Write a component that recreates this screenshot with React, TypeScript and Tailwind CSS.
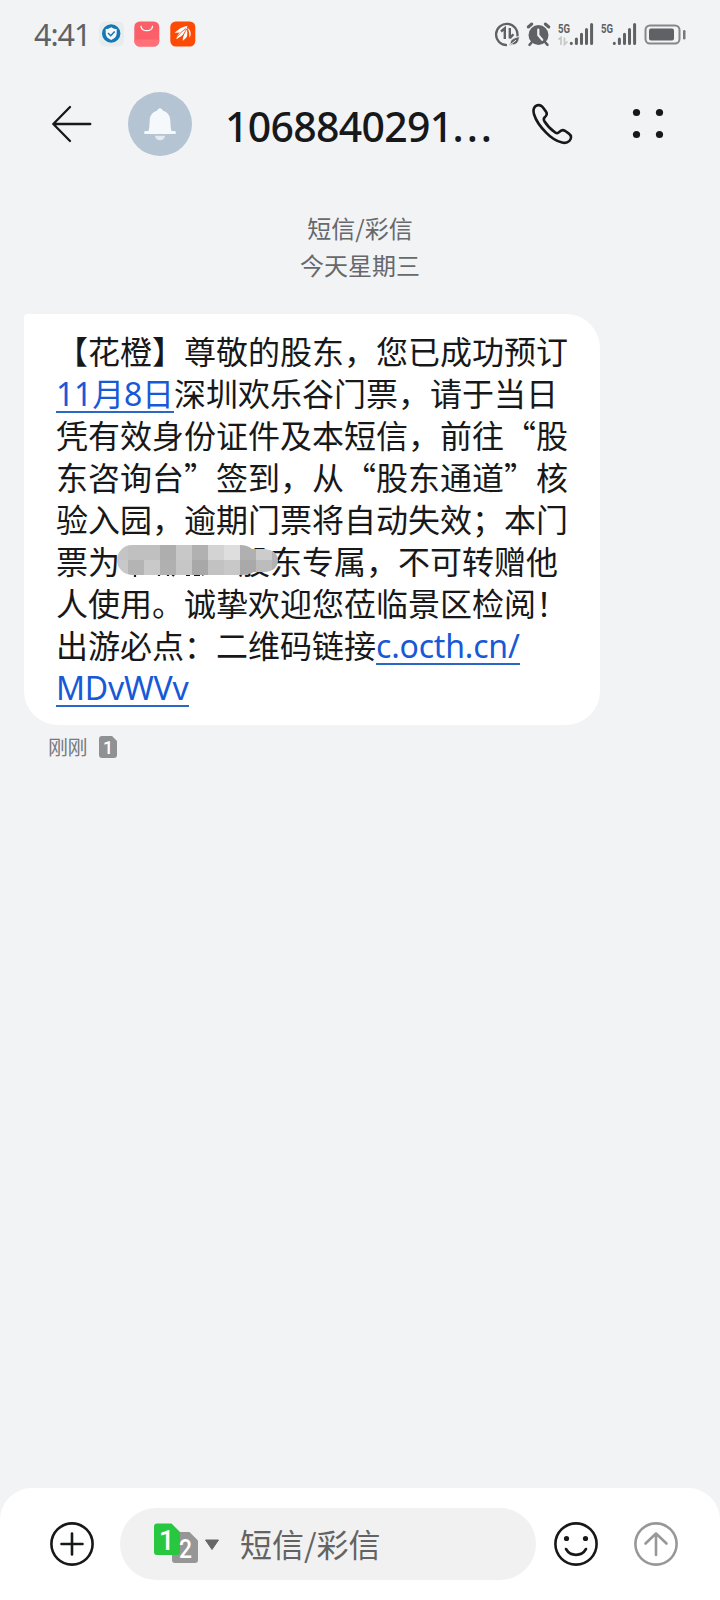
import type { ReactNode } from "react";

const MOSAIC = [
  ["#c4c4c4", "#c0c0c0", "#c0c0c0", "#aeaeae", "#c8c8c8", "#b1b1b1", "#d3d3d3", "#dedede", "#b0b0b0", "#cccccc", "#b6b6b6"],
  ["#c8c8c8", "#b4b4b4", "#c9c9c9", "#b0b0b0", "#c6c6c6", "#a8a8a8", "#c2c2c2", "#c8c8c8", "#a9a9a9", "#bcbcbc", "#b2b2b2"],
];

function StatusBar() {
  return (
    <div className="flex h-[68px] items-center justify-between pl-[34px] pr-[34px] text-[#5f6164]">
      <div className="flex items-center">
        <span className="w-[65px] whitespace-nowrap font-['Noto_Sans','Noto_Sans_CJK_SC',sans-serif] text-[30.5px] leading-[44px] tracking-[-1px]">4:41</span>
        <svg width="98" height="26" viewBox="0 0 98 26">
          {/* security app */}
          <rect x="0" y="0.5" width="25" height="25" rx="6" fill="#e9ecef" />
          <circle cx="12.2" cy="12.5" r="9.2" fill="#1577b3" />
          <path d="M12.2 6.2c2 1.4 3.8 1.8 5.5 1.8v4.2c0 3.4-2.2 5.4-5.5 6.8c-3.3-1.4-5.5-3.4-5.5-6.8V8c1.7 0 3.5-.4 5.5-1.8z" fill="#f5f8fa" />
          <path d="m9 12 2.7 2.7 4-4.2" fill="none" stroke="#1577b3" strokeWidth="1.5" />
          {/* app market */}
          <rect x="35.3" y="0.5" width="25" height="25" rx="5.5" fill="#fb6068" />
          <path d="M35.3 18.5h25V20a5.5 5.5 0 0 1-5.5 5.5h-14a5.5 5.5 0 0 1-5.5-5.5z" fill="#ff7078" />
          <path d="M42 5.5a5.8 4.8 0 0 0 11.5 0" fill="none" stroke="#fff" strokeWidth="1.3" strokeLinecap="round" />
          {/* wing logo */}
          <rect x="71.3" y="0.5" width="25" height="25" rx="5.5" fill="#fb4b05" />
          <path d="M75.5 11.8c3.5-3 8-6.600 13-6.800c-1.200 3.800-4.200 6.300-7.800 6.500c-1.900.2-3.500.1-5.200.3z" fill="#fff" />
          <path d="M77.500 18.200c.2-4.500 4.500-8.500 10-12.200c.7 4.300-2 6.800-4.500 8.600c-1.800 1.300-3.300 2.400-5.500 3.600z" fill="#fff" />
          <path d="M83.800 19.800c-.7-3.800 2.400-8.300 4.200-13c2.300 4.500 1 9.500-4.200 13z" fill="#fff" />
          <path d="M90.500 16.800c.1-3.200-.6-6.800-1.700-9.800c3 2.400 4 6.300 1.700 9.800z" fill="#fff" />
          <path d="M78.500 15.500c2.300-3.300 5.700-6 8.500-7.900M82.800 18.500c.8-4 2.900-7 4.900-10.500M88.600 17c.3-3.800 0-6.300-.3-9" fill="none" stroke="#fb4b05" strokeWidth=".9" />
        </svg>
      </div>
      <svg width="192" height="26" viewBox="494 21 192 26" fill="currentColor">
        {/* data saver */}
        <path d="M517.3 36.5A10.7 10.7 0 1 0 507 45.2" fill="none" stroke="currentColor" strokeWidth="2.3" />
        <path d="M501 31.5l3.8-3.2V39M509.8 28v10.5M509.8 38.3l3.6-4" fill="none" stroke="currentColor" strokeWidth="2.4" />
        <path d="M519.3 36.5c-.2 6-3 8.7-7.5 8.2l-2 1.3l-.8-1.4l1.3-1c-.5-4.5 4.5-5.8 9-7.1z" stroke="#f1f3f5" strokeWidth=".8" />
        <path d="m510 45 6-4.8" stroke="#f1f3f5" strokeWidth="1" />
        {/* alarm */}
        <circle cx="538.5" cy="35" r="10" />
        <path d="m528.3 27 3.5-3M545.3 24l3.500 3" fill="none" stroke="currentColor" strokeWidth="3" strokeLinecap="round" />
        <path d="m532 42-2.5 2.8M545 42l2.5 2.8" stroke="currentColor" strokeWidth="2.5" strokeLinecap="round" />
        <path d="M538.3 29.5v5.7l3.9 4.6" fill="none" stroke="#f1f3f5" strokeWidth="2.2" strokeLinecap="round" />
        {/* signal, both sims */}
        <g fontFamily="Roboto, sans-serif" fontSize="13.5" fontWeight="700">
          <text x="558" y="33" textLength="12" lengthAdjust="spacingAndGlyphs">5G</text>
          <text x="601" y="33" textLength="12" lengthAdjust="spacingAndGlyphs">5G</text>
        </g>
        <path d="m558.5 39.5 2.5-2V45M564.5 37.500v7l3-3" fill="none" stroke="#c5c7c9" strokeWidth="1.7" />
        <g stroke="currentColor" strokeWidth="3" strokeLinecap="round">
          <path d="M571.3 43.3v.1M576.4 39v4.500M581.500 34.200v9.300M586.500 29.500v14M591.600 24.500v19" />
          <path d="M614.3 43.3v.1M619.400 39v4.500M624.500 34.200v9.300M629.500 29.500v14M634.600 24.500v19" />
        </g>
        {/* battery */}
        <rect x="645.5" y="25.5" width="34" height="18" rx="4.5" fill="none" stroke="#85878a" strokeWidth="2" />
        <rect x="649" y="28.5" width="25" height="12" rx="2" />
        <rect x="683" y="30" width="2.5" height="9.5" rx="1.2" fill="#77797c" />
      </svg>
    </div>
  );
}

function Header() {
  return (
    <header className="flex h-[112px] items-center text-[#17181a]">
      <svg className="ml-[50px]" width="44" height="40" viewBox="50 104 44 40" fill="none" stroke="currentColor" strokeWidth="2.3" strokeLinecap="round" strokeLinejoin="round">
        <path d="M70 107 53.3 124 70 141M53.3 124h37" />
      </svg>
      <svg className="ml-[34px]" width="64" height="64" viewBox="0 0 64 64">
        <circle cx="32" cy="32" r="32" fill="#b5c4d2" />
        <path d="M17.5 39h3c1-3.5 1-7 1.2-11c.3-5 3.3-8.2 7.3-9.3c.7-1.5 1.7-2.4 3-2.4s2.3.9 3 2.4c4 1.100 7 4.300 7.300 9.300c.2 4 .2 7.500 1.200 11h3a1.500 1.500 0 0 1 0 3h-29a1.500 1.500 0 0 1 0-3z" fill="#f6f9fb" />
        <path d="M27 43.700h10a5 4.600 0 0 1-10 0z" fill="#e3e9ef" />
      </svg>
      <h1 className="ml-[33px] w-[305px] whitespace-nowrap pt-[3px] font-['Noto_Sans','Noto_Sans_CJK_SC',sans-serif] text-[41px] font-medium leading-[56px] tracking-[-0.7px]">
        1068840291<span className="tracking-[3px]">...</span>
      </h1>
      <svg width="44" height="44" viewBox="530 102 44 44" fill="none" stroke="currentColor" strokeWidth="2.6" strokeLinejoin="round">
        <path d="M534.8 106.8c2.7-2.6 6-2 8 .5l3.2 4.3c1.8 2.5.3 4.3-1.3 5.7c-1.2 1.1-1.2 2.3-.3 3.9c2.8 4.6 6.6 8.3 10.8 11.3c1.6 1.1 2.8.9 3.9-.3c1.7-2 3.4-2.9 5.8-1.4l4 2.8c2.8 2 2.7 5 .5 7.3c-2 2-4.5 2.400-7.300 1.700c-6-1.600-11.500-5.300-16-10c-5.400-5.400-10-11.600-12-18.100c-.8-2.800-.9-5.800.7-7.700z" />
      </svg>
      <svg className="ml-[58px]" width="32" height="32" viewBox="632 108 32 32" fill="currentColor">
        <circle cx="636.5" cy="112.5" r="3.6" />
        <circle cx="659.5" cy="112.5" r="3.6" />
        <circle cx="636.5" cy="134.5" r="3.6" />
        <circle cx="659.5" cy="134.5" r="3.6" />
      </svg>
    </header>
  );
}

function Link({ children }: { children: ReactNode }) {
  return (
    <a className="inline-block h-[42px] border-b-2 border-[#2a68c8] align-top font-['Noto_Sans','Noto_Sans_CJK_SC',sans-serif] leading-[46px] tracking-[-0.2px] text-[#1759d6]">
      {children}
    </a>
  );
}

function Redacted() {
  return (
    <span className="relative inline-block h-[42px] w-[150px] align-top text-right">
      股
      <svg className="absolute left-[-4px] top-[1px]" width="164" height="40" viewBox="116 540 164 40">
        <path d="M135 572v5M121 568h3M159 573v3M168 573v3M172 574l2 2M186 575h4M194 575h6M206 572l-4 3M210 574h3" stroke="#17181a" strokeWidth="2.2" />
        <clipPath id="smudge">
          <path d="M132 545h108c5 0 9 1.500 12 4h11c10 0 15 5 15 11.500s-5 11.500-14 11.500h-10c-4 2-8 3-14 3H132a15 15 0 0 1 0-30z" />
        </clipPath>
        <g clipPath="url(#smudge)" shapeRendering="crispEdges">
          {MOSAIC.map((row, r) =>
            row.map((fill, c) => <rect key={`${r}-${c}`} x={112 + c * 16} y={544 + r * 16} width="16" height="16" fill={fill} />)
          )}
        </g>
      </svg>
    </span>
  );
}

function Message() {
  return (
    <div className="ml-6 w-[576px] whitespace-nowrap rounded-[34px] rounded-tl-[4px] bg-white pb-[18px] pl-8 pt-[15px] text-[32px] leading-[42px] text-[#17181a]">
      <p className="h-[42px]">【花橙】尊敬的股东，您已成功预订</p>
      <p className="h-[42px]"><Link>11月8日</Link>深圳欢乐谷门票，请于当日</p>
      <p className="h-[42px]">凭有效身份证件及本短信，前往“股</p>
      <p className="h-[42px]">东咨询台”签到，从“股东通道”核</p>
      <p className="h-[42px]">验入园，逾期门票将自动失效；本门</p>
      <p className="h-[42px]">票为<Redacted />东专属，不可转赠他</p>
      <p className="h-[42px]">人使用。诚挚欢迎您莅临景区检阅！</p>
      <p className="h-[42px]">出游必点：二维码链接<Link>c.octh.cn/</Link></p>
      <p className="h-[42px]"><Link>MDvWVv</Link></p>
    </div>
  );
}

function Composer() {
  return (
    <footer className="flex h-28 items-center rounded-t-[32px] bg-white pl-[50px] text-[#17181a]">
      <svg width="44" height="44" viewBox="0 0 44 44" fill="none" stroke="currentColor" strokeWidth="2.6" strokeLinecap="round">
        <circle cx="22" cy="22" r="20.6" />
        <path d="M22 11.5v21M11.5 22h21" />
      </svg>
      <div className="ml-[26px] flex h-[72px] w-[416px] items-center rounded-full bg-[#f1f1f1]">
        <svg className="ml-[34px]" width="66" height="42" viewBox="0 0 66 42" fontFamily="Roboto, sans-serif" fontWeight="500" fill="#fff">
          <path d="M18 12a3 3 0 0 1 3-3h14.500l8.500 8.500V37a3 3 0 0 1-3 3H21a3 3 0 0 1-3-3z" fill="#969696" />
          <path d="M0 3.500a3 3 0 0 1 3-3h14.500l8.500 8.500v20a3 3 0 0 1-3 3H3a3 3 0 0 1-3-3z" fill="#28c740" />
          <text x="5" y="26.5" fontSize="27">1</text>
          <text x="25" y="35" fontSize="25" textLength="13" lengthAdjust="spacingAndGlyphs">2</text>
          <path d="M51.5 17h13L58 26.5z" fill="#666" stroke="#666" strokeWidth="1" strokeLinejoin="round" />
        </svg>
        <span className="ml-5 pb-[3px] text-[32px] leading-[42px] text-[#636363]">短信/彩信</span>
      </div>
      <svg className="ml-[18px]" width="44" height="44" viewBox="0 0 44 44" fill="none" stroke="currentColor" strokeWidth="2.6" strokeLinecap="round">
        <circle cx="22" cy="22" r="20.6" />
        <path d="M12 27c4.5 7.800 15.500 7.800 20 0" />
        <circle cx="12.5" cy="16.5" r="2.6" fill="currentColor" stroke="none" />
        <circle cx="31.5" cy="16.5" r="2.6" fill="currentColor" stroke="none" />
      </svg>
      <svg className="ml-9 text-[#989898]" width="44" height="44" viewBox="0 0 44 44" fill="none" stroke="currentColor" strokeWidth="2.6" strokeLinecap="round" strokeLinejoin="round">
        <circle cx="22" cy="22" r="20.6" />
        <path d="M22 33V11.5M11.5 21.5 22 11.5l10.500 10" />
      </svg>
    </footer>
  );
}

export default function App() {
  return (
    <div lang="zh-CN" className="flex h-[1600px] w-[720px] flex-col overflow-hidden bg-[#f1f3f5] font-['Noto_Sans_CJK_SC',sans-serif]">
      <StatusBar />
      <Header />
      <div className="mt-[29px] text-center text-2xl leading-[37px] text-[#66686b]">
        <p>短信/彩信</p>
        <p>今天星期三</p>
      </div>
      <div className="mt-[31px]">
        <Message />
      </div>
      <div className="ml-12 mt-2 flex h-7 items-center gap-3 text-[20px] leading-7 text-[#77797c]">
        <span className="w-[39px] whitespace-nowrap tracking-[-0.5px]">刚刚</span>
        <svg width="18" height="22" viewBox="0 0 18 22">
          <path d="M0 3a3 3 0 0 1 3-3h10l5 5v14a3 3 0 0 1-3 3H3a3 3 0 0 1-3-3z" fill="#909193" />
          <text x="4" y="17.5" fontFamily="Roboto, sans-serif" fontSize="18" fontWeight="500" fill="#fff">1</text>
        </svg>
      </div>
      <div className="flex-1" />
      <Composer />
    </div>
  );
}
